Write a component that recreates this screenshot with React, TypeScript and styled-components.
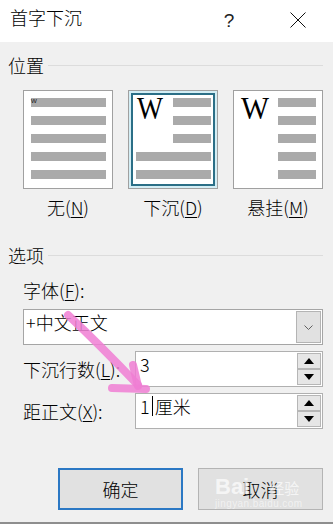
import React from "react";
import styled, { createGlobalStyle, css } from "styled-components";

const CJK = `"Noto Sans CJK SC", "Noto Sans", sans-serif`;

const GlobalStyle = createGlobalStyle`
  html, body { margin: 0; padding: 0; background: #f0f0f0; }
  body { font-family: ${CJK}; }
`;

const Dialog = styled.div`
  position: relative;
  width: 333px;
  height: 524px;
  box-sizing: border-box;
  background: #f0f0f0;
  border-bottom: 2px solid #8e8e8e;
  display: flex;
  flex-direction: column;
  font-family: ${CJK};
  font-size: 18px;
  font-weight: 300;
  color: #000;
  overflow: hidden;
`;

const TitleBar = styled.div`
  height: 42px;
  flex: none;
  box-sizing: border-box;
  background: #fff;
  display: flex;
  align-items: flex-start;
  padding: 5px 12px 0 10px;
`;

const Title = styled.div`
  flex: 1;
  line-height: 24px;
  font-size: 18px;
`;

const CaptionButton = styled.div<{ $gap?: number }>`
  width: 46px;
  height: 30px;
  margin-left: ${(p) => p.$gap ?? 0}px;
  display: flex;
  align-items: center;
  justify-content: center;
  font-family: "Liberation Sans", Arial, sans-serif;
  font-size: 19px;
  line-height: 1;
  color: #222;
`;

const Body = styled.div`
  flex: 1;
  display: flex;
  flex-direction: column;
  padding: 11px 10px 0 8px;
`;

const GroupHeader = styled.div<{ $top?: number }>`
  display: flex;
  align-items: center;
  height: 24px;
  line-height: 24px;
  margin-top: ${(p) => p.$top ?? 0}px;
`;

const Rule = styled.div`
  flex: 1;
  height: 1px;
  background: #dcdcdc;
  margin-left: 4px;
`;

const ThumbRow = styled.div`
  display: flex;
  gap: 15px;
  margin: 13px 0 0 15px;
`;

const ThumbColumn = styled.div`
  width: 90px;
  display: flex;
  flex-direction: column;
  align-items: center;
`;

const ThumbBox = styled.div<{ $selected?: boolean }>`
  width: 90px;
  height: 99px;
  box-sizing: border-box;
  border: 1px solid #a0a0a0;
  background: #fff;
  ${(p) =>
    p.$selected &&
    css`
      box-shadow: inset 0 0 0 2px #d4eef5, inset 0 0 0 4px #2b6f87;
    `}
  svg {
    display: block;
  }
`;

const ThumbLabel = styled.div`
  margin-top: 6px;
  line-height: 24px;
  white-space: nowrap;
`;

const Mnemonic = styled.span`
  text-decoration: underline;
  text-decoration-thickness: 1px;
  text-underline-offset: 2px;
`;

const FieldLabel = styled.div`
  margin: 11px 0 0 15px;
  line-height: 24px;
`;

const ComboBox = styled.div`
  margin: 7px 0 0 15px;
  height: 36px;
  box-sizing: border-box;
  border: 1px solid #a5a5a5;
  background: #fff;
  display: flex;
`;

const FieldText = styled.div<{ $pad: number }>`
  flex: 1;
  padding-left: ${(p) => p.$pad}px;
  line-height: 24px;
  white-space: nowrap;
  display: flex;
  align-items: flex-start;
`;

const DropButton = styled.div`
  width: 25px;
  margin: 1px;
  box-sizing: border-box;
  background: #e1e1e1;
  border: 1px solid #b4b4b4;
  display: flex;
  align-items: center;
  justify-content: center;
`;

const SpinRow = styled.div`
  display: flex;
  align-items: center;
  margin: 6px 0 0 15px;
`;

const SpinLabel = styled.div`
  width: 112px;
  line-height: 24px;
  white-space: nowrap;
`;

const SpinBox = styled.div`
  flex: 1;
  height: 36px;
  box-sizing: border-box;
  border: 1px solid #b0b0b0;
  background: #fff;
  display: flex;
`;

const SpinButtons = styled.div`
  width: 24px;
  margin: 1px;
  display: flex;
  flex-direction: column;
`;

const SpinButton = styled.div`
  flex: 1;
  box-sizing: border-box;
  background: #e6e6e6;
  border: 1px solid #b6b6b6;
  display: flex;
  align-items: center;
  justify-content: center;
`;

const Caret = styled.span`
  display: inline-block;
  width: 1px;
  height: 20px;
  margin: 2px 2px 0 2px;
  background: #000;
`;

const ButtonRow = styled.div`
  display: flex;
  justify-content: flex-end;
  gap: 15px;
  margin-top: 39px;
`;

const DialogButton = styled.div<{ $primary?: boolean }>`
  position: relative;
  width: 125px;
  height: 42px;
  box-sizing: border-box;
  background: #e1e1e1;
  border: ${(p) => (p.$primary ? "2px solid #2b78c4" : "1px solid #b4b4b4")};
  display: flex;
  align-items: center;
  justify-content: center;
  line-height: 24px;
`;

const Watermark = styled.div`
  position: absolute;
  left: 16px;
  top: 2px;
  width: 100px;
  color: rgba(255, 255, 255, 0.7);
  pointer-events: none;
  font-family: "Liberation Sans", Arial, sans-serif;
`;

const WatermarkMain = styled.div`
  display: flex;
  align-items: flex-end;
  height: 28px;
  font-size: 22px;
  font-weight: bold;
  line-height: 24px;
  span + span {
    font-family: ${CJK};
    font-size: 15px;
    font-weight: normal;
    margin-left: 20px;
    line-height: 22px;
  }
`;

const WatermarkSub = styled.div`
  font-size: 10px;
  line-height: 10px;
  letter-spacing: 0.4px;
  color: rgba(255, 255, 255, 0.55);
`;

const ArrowLayer = styled.svg`
  position: absolute;
  left: 0;
  top: 0;
  pointer-events: none;
`;

const Bars: React.FC<{ indents: number[] }> = ({ indents }) => (
  <>
    {indents.map((ind, i) => (
      <rect key={i} x={7 + ind} y={7 + 18 * i} width={75 - ind} height={9} fill="#aaaaaa" />
    ))}
  </>
);

const BigW: React.FC<{ x: number; len: number }> = ({ x, len }) => (
  <text
    x={x}
    y={28}
    fontFamily='"Liberation Serif", "Times New Roman", serif'
    fontSize={31}
    fontWeight={400}
    textLength={len}
    lengthAdjust="spacingAndGlyphs"
    fill="#000"
  >
    W
  </text>
);

const SpinArrows: React.FC = () => (
  <SpinButtons>
    <SpinButton>
      <svg width="10" height="6" viewBox="0 0 10 6">
        <path d="M0 6 L5 0 L10 6 Z" fill="#000" />
      </svg>
    </SpinButton>
    <SpinButton>
      <svg width="10" height="6" viewBox="0 0 10 6">
        <path d="M0 0 L10 0 L5 6 Z" fill="#000" />
      </svg>
    </SpinButton>
  </SpinButtons>
);

export default function App() {
  return (
    <Dialog>
      <GlobalStyle />
      <TitleBar>
        <Title>首字下沉</Title>
        <CaptionButton>?</CaptionButton>
        <CaptionButton $gap={23}>
          <svg width="16" height="16" viewBox="0 0 16 16">
            <path d="M0.5 0.5 L15.5 15.5 M15.5 0.5 L0.5 15.5" stroke="#111" strokeWidth="1" fill="none" />
          </svg>
        </CaptionButton>
      </TitleBar>
      <Body>
        <GroupHeader>
          位置
          <Rule />
        </GroupHeader>
        <ThumbRow>
          <ThumbColumn>
            <ThumbBox>
              <svg width="88" height="97" viewBox="0 0 88 97">
                <Bars indents={[0, 0, 0, 0, 0]} />
                <text x={7} y={12} fontFamily='"Liberation Sans", Arial, sans-serif' fontSize={8} fill="#222">
                  w
                </text>
              </svg>
            </ThumbBox>
            <ThumbLabel>
              无(<Mnemonic>N</Mnemonic>)
            </ThumbLabel>
          </ThumbColumn>
          <ThumbColumn>
            <ThumbBox $selected>
              <svg width="88" height="97" viewBox="0 0 88 97">
                <Bars indents={[37, 37, 37, 0, 0]} />
                <BigW x={8} len={26} />
              </svg>
            </ThumbBox>
            <ThumbLabel>
              下沉(<Mnemonic>D</Mnemonic>)
            </ThumbLabel>
          </ThumbColumn>
          <ThumbColumn>
            <ThumbBox>
              <svg width="88" height="97" viewBox="0 0 88 97">
                <Bars indents={[37, 37, 37, 37, 37]} />
                <BigW x={7} len={28} />
              </svg>
            </ThumbBox>
            <ThumbLabel>
              悬挂(<Mnemonic>M</Mnemonic>)
            </ThumbLabel>
          </ThumbColumn>
        </ThumbRow>

        <GroupHeader $top={24}>
          选项
          <Rule />
        </GroupHeader>
        <FieldLabel>
          字体(<Mnemonic>F</Mnemonic>):
        </FieldLabel>
        <ComboBox>
          <FieldText $pad={2}>+中文正文</FieldText>
          <DropButton>
            <svg width="9" height="5" viewBox="0 0 9 5">
              <path d="M0.5 0.5 L4.5 4.5 L8.5 0.5" stroke="#606060" strokeWidth="1" fill="none" />
            </svg>
          </DropButton>
        </ComboBox>
        <SpinRow>
          <SpinLabel>
            下沉行数(<Mnemonic>L</Mnemonic>):
          </SpinLabel>
          <SpinBox>
            <FieldText $pad={4}>3</FieldText>
            <SpinArrows />
          </SpinBox>
        </SpinRow>
        <SpinRow>
          <SpinLabel>
            距正文(<Mnemonic>X</Mnemonic>):
          </SpinLabel>
          <SpinBox>
            <FieldText $pad={4}>
              1<Caret />
              厘米
            </FieldText>
            <SpinArrows />
          </SpinBox>
        </SpinRow>

        <ButtonRow>
          <DialogButton $primary>确定</DialogButton>
          <DialogButton>
            取消
            <Watermark>
              <WatermarkMain>
                <span>Bai</span>
                <span>经验</span>
              </WatermarkMain>
              <WatermarkSub>jingyan.baidu.com</WatermarkSub>
            </Watermark>
          </DialogButton>
        </ButtonRow>
      </Body>

      <ArrowLayer width="333" height="524" viewBox="0 0 333 524">
        <g stroke="#f07ed4" strokeOpacity="0.85" strokeWidth="8" strokeLinecap="round" strokeLinejoin="round" fill="none">
          <path d="M68 315 Q 100 345 138 385" />
          <path d="M133 365 L138 386" />
          <path d="M112 388 L146 389" />
        </g>
      </ArrowLayer>
    </Dialog>
  );
}
